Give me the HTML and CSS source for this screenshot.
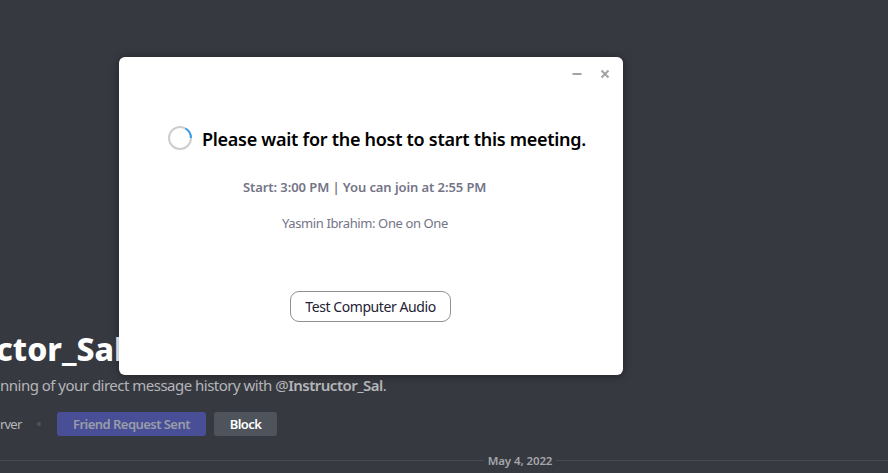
FILE: index.html
```html
<!DOCTYPE html>
<html lang="en">
<head>
<meta charset="utf-8">
<title>Meeting</title>
<link rel="stylesheet" href="styles.css">
</head>
<body>
<main class="chat">
  <h1 class="name"><span>ctor_Sal</span></h1>
  <p class="history"><span class="intro">nning of your direct message history with </span><span class="mention">@<strong>Instructor_Sal</strong>.</span></p>
  <div class="actions">
    <span class="server">rver</span>
    <i class="dot"></i>
    <button class="btn friend"><span>Friend Request Sent</span></button>
    <button class="btn block"><span>Block</span></button>
  </div>
  <div class="divider"><span>May 4, 2022</span></div>
</main>
<section class="dialog">
  <div class="controls">
    <svg width="10" height="10" viewBox="0 0 10 10"><path d="M0.5 5h9" stroke="#a3a3a3" stroke-width="2"/></svg>
    <svg width="10" height="10" viewBox="0 0 10 10"><path d="M1.5 1.5l7 7M8.500 1.500l-7 7" stroke="#a3a3a3" stroke-width="2"/></svg>
  </div>
  <div class="heading">
    <svg width="24" height="24" viewBox="0 0 24 24" fill="none" stroke-width="2"><circle cx="12" cy="12" r="11" stroke="#cdcdcd"/><path d="M17.500 2.500A11 11 0 0 1 23 12" stroke="#2e9df5"/></svg>
    <h2><span>Please wait for the host to start this meeting.</span></h2>
  </div>
  <p class="time"><span>Start: 3:00 PM | You can join at 2:55 PM</span></p>
  <p class="topic"><span>Yasmin Ibrahim: One on One</span></p>
  <button class="audio"><span>Test Computer Audio</span></button>
</section>
</body>
</html>
```
FILE: styles.css
```css
* { box-sizing: border-box; }
body {
  margin: 0;
  height: 473px;
  overflow: hidden;
  position: relative;
  background: #373940;
  font-family: "Noto Sans", sans-serif;
  white-space: nowrap;
}
h1, h2, p { margin: 0; }
button { margin: 0; padding: 0; border: 0; font-family: inherit; }
.chat { padding-top: 328px; }
.name {
  height: 43px;
  margin-left: -4px;
  line-height: 42px;
  font-size: 32px;
  font-weight: 800;
  color: #fff;
}
.history {
  height: 28px;
  line-height: 28px;
  font-size: 15px;
  letter-spacing: -.51px;
  color: #b4b6b9;
}
.history strong { font-weight: 600; }
.actions { display: flex; align-items: center; height: 24px; margin-top: 13px; }
.server { width: 21px; font-size: 13px; letter-spacing: -.8px; color: #b4b6b9; }
.dot { width: 4px; height: 4px; margin: 0 16px; border-radius: 50%; background: #4f545c; }
.btn { height: 24px; border-radius: 3px; font-size: 13px; font-weight: 600; line-height: 24px; letter-spacing: -.54px; }
.friend { width: 149px; background: #484f96; color: #999caa; }
.block { width: 63px; margin-left: 8px; background: #4f545c; color: #fff; }
.divider {
  display: flex;
  align-items: center;
  height: 16px;
  margin-top: 16px;
  font-size: 11.500px;
  font-weight: 600;
  letter-spacing: -.1px;
  color: #a3a6aa;
}
.divider span { width: 72px; text-align: center; }
.divider::before, .divider::after { content: ""; height: 1px; background: #474a51; }
.divider::before { width: 484px; }
.divider::after { flex: 1; }
.dialog {
  position: absolute;
  left: 119px;
  top: 57px;
  width: 504px;
  height: 318px;
  border-radius: 6px;
  background: #fff;
  box-shadow: 0 1px 8px rgba(0, 0, 0, .4);
}
.controls { display: flex; justify-content: flex-end; gap: 18px; padding: 12px 13px 0 0; height: 69px; }
.heading { display: flex; padding-left: 49px; height: 49px; }
h2 { margin-left: 10px; font-size: 18px; line-height: 27px; font-weight: 600; letter-spacing: -.28px; color: #000; }
.time { height: 24px; padding-left: 124px; font-size: 13px; line-height: 24px; font-weight: 600; letter-spacing: -.08px; color: #747487; }
.topic { height: 24px; margin-top: 12px; padding-left: 163px; font-size: 13px; line-height: 24px; letter-spacing: -.39px; color: #747487; }
.audio {
  display: block;
  width: 161px;
  height: 31px;
  margin: 56px 0 0 171px;
  border: 1px solid #909096;
  border-radius: 9px;
  background: #fff;
  font-size: 14px;
  letter-spacing: -.42px;
  color: #232333;
}
```
